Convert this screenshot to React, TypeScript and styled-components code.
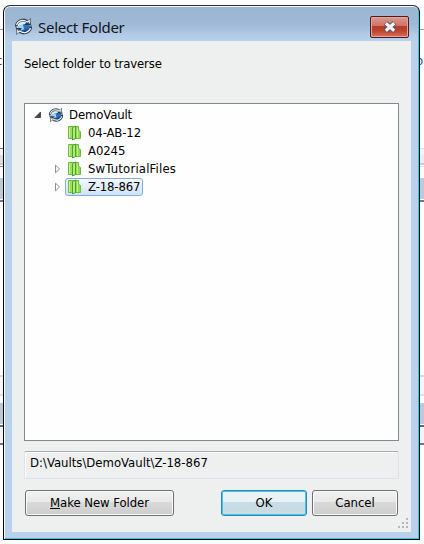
import React from "react";
import styled, { createGlobalStyle } from "styled-components";

const Global = createGlobalStyle`
  * { box-sizing: border-box; }
  body { margin: 0; background: #fefefe; overflow: hidden; }
`;

const Desktop = styled.div`
  display: grid;
  grid-template-columns: 3px 417px 4px;
  width: 424px;
  height: 544px;
  font: 13px/18px "DejaVu Sans Condensed", "DejaVu Sans", sans-serif;
  font-stretch: condensed;
  color: #000;
`;

const Backdrop = styled.div<{ $side: "left" | "right" }>`
  overflow: hidden;
  padding-top: 52px;
  color: #35506d;
  white-space: nowrap;
  text-indent: -4px;
  background: linear-gradient(
    #fefefe 29px, #999 29px 30px, #fefefe 30px 148px,
    ${(p) => (p.$side === "left" ? "#777" : "#ddd")} 148px 149px,
    #f4f4f4 149px 155px,
    ${(p) => (p.$side === "left" ? "#dedede" : "#eee")} 155px 163px,
    #ccc 163px 165px, #fefefe 165px 166px,
    ${(p) => (p.$side === "left" ? "#888" : "#ddd")} 166px 167px,
    #fafafa 167px 178px, #bdcbd8 178px 199px, #fff 199px 200px,
    #777 200px 202px, #fefefe 202px 375px, #d8dade 375px 377px,
    #f5f6f6 377px 394px, #dedfee 394px 396px, #fefefe 396px 403px,
    #bdcad6 403px 424px, #fff 424px 425px, #666 425px 427px,
    #f4f4f4 427px 443px, #777 443px 445px, #fefefe 445px
  );
`;

const Dialog = styled.section`
  margin-top: 5px;
  height: 535px;
  border: 1px solid #050509;
  border-top-color: #2d2c3b;
  border-radius: 7px 7px 0 0;
  background: #b9d1ea;
  box-shadow: inset 1px 1px 0 #f8fcff, inset -1px -1px 0 #20cae8;
  padding: 1px 8px 8px;
`;

const TitleBar = styled.header`
  display: flex;
  align-items: center;
  height: 34px;
  margin: 0 -7px;
  padding: 4px 9px 0 9px;
  border-radius: 5px 5px 0 0;
  background: linear-gradient(#9ab4d3, #a0b9d5 50%, #a9c1dc 68%, #b2c8e4 78%, #b9d1ea);
`;

const Title = styled.h1`
  flex: 1;
  margin: 0 0 0 5px;
  padding-top: 1px;
  font: 15px/22px "Noto Sans", sans-serif;
  letter-spacing: -0.28px;
  color: #10151c;
`;

const CloseButton = styled.button`
  display: grid;
  place-items: center;
  width: 39px;
  height: 22px;
  margin-top: 2px;
  padding: 0;
  border: 1px solid #4d1924;
  border-radius: 2px;
  background: linear-gradient(#db9a8e, #cf7164 45%, #b53c27 47%, #bd432f 70%, #d5705d);
  box-shadow: inset 0 0 0 1px #e6a59b;
`;

const Content = styled.main`
  display: flex;
  flex-direction: column;
  width: 399px;
  height: 491px;
  padding: 13px 12px 0;
  background: #eef0f0;
`;

const Prompt = styled.div`
  height: 49px;
  padding-top: 1px;
  letter-spacing: -0.16px;
`;

const Tree = styled.ul`
  height: 338px;
  margin: 0;
  padding: 2px 0 0 9px;
  list-style: none;
  border: 1px solid #828790;
  background: #fefefe;
`;

const TreeRow = styled.li<{ $level: number }>`
  display: flex;
  align-items: center;
  height: 18px;
  padding-left: ${(p) => p.$level * 19}px;
`;

const Expander = styled.span<{ $nested?: boolean }>`
  display: flex;
  width: 12px;
  padding-left: ${(p) => (p.$nested ? 1 : 0)}px;
`;

const Item = styled.span<{ $selected?: boolean; $spacing: number }>`
  display: flex;
  align-items: center;
  gap: 5px;
  height: 18px;
  padding: 0 2px 0 1px;
  letter-spacing: ${(p) => p.$spacing}px;
  border: 1px solid ${(p) => (p.$selected ? "#84acdd" : "transparent")};
  border-radius: 3px;
  background: ${(p) => (p.$selected ? "linear-gradient(#f3f8fd, #d0e2f7)" : "none")};
`;

const PathBox = styled.div`
  height: 28px;
  margin-top: 10px;
  padding: 2px 5px;
  border: 1px solid #dfe2eb;
  border-top-color: #a9abb2;
  border-radius: 2px;
  box-shadow: inset 1px 1px 0 #fff;
`;

const Actions = styled.footer`
  display: flex;
  gap: 5px;
  margin: 11px 1px 0 1px;
`;

const Button = styled.button<{ $width: number; $primary?: boolean }>`
  width: ${(p) => p.$width}px;
  height: 26px;
  padding: 0;
  font: inherit;
  letter-spacing: -0.05px;
  color: #000;
  border: 1px solid ${(p) => (p.$primary ? "#3a80ad" : "#707070")};
  border-radius: 3px;
  background: ${(p) =>
    p.$primary
      ? "linear-gradient(#eaf2f4 0 46%, #c8dde7 46%, #c9dbe0)"
      : "linear-gradient(#f1f1f1, #e9e9e9 46%, #dadada 46%, #cdcdcd)"};
  box-shadow: inset 0 0 0 1px ${(p) => (p.$primary ? "#35cdef" : "#fafafa")};
`;

const Spacer = styled.div`
  flex: 1;
`;

const GripRow = styled.div`
  display: flex;
  justify-content: flex-end;
  margin: 1px -10px 0 0;
`;

const VaultIcon = ({ size }: { size: number }) => (
  <svg width={size} height={size} viewBox="0 0 19 19">
    <circle cx="9.500" cy="9.500" r="7.500" fill="#dce8f2" stroke="#46586b" />
    <path d="M3.500 9.500 9 7.500l7 1v4l-5 3-7-2z" fill="#2b7fce" />
    <path d="m3.500 9.500 5.500-2 2 4.500-5 1.500z" fill="#a4d5f4" />
    <path d="m9 7.500 6.500.5-1.500 4-4 .500z" fill="#2674c9" />
    <path d="m7 14 8-3-1.500 3.500-4 2z" fill="#174c9a" />
    <path d="M1 9.500C1 5 5 1.500 10 2l4 1.500L16.500 1v7H10l2.500-2.500C9 3.500 4 5 3.500 9z" fill="#2b3847" />
    <path d="M18 9.500c0 5-4 8-9 7.500L5 15.500 2.500 18v-7H8l-2 2.500c4 2 9.500.5 9.500-4z" fill="#2b3847" />
    <path d="M2.500 8C4 3.500 9 2 13.500 5l1.800-1.500v3M16.500 11C15 15.500 10 17 5.500 14l-1.800 1.500v-3" stroke="#eef3f6" strokeWidth="1.200" fill="none" />
  </svg>
);

const FolderIcon = () => (
  <svg width="15" height="16" viewBox="0 0 15 16">
    <path d="M1.500 1.500h5v12h-5z" fill="#9be35c" stroke="#6fb944" />
    <path d="M2.500 2.500v10.500" stroke="#c9f596" />
    <path d="M7.500 1.500h4V5.500l2 1v7h-6z" fill="#8edb4e" stroke="#6fb944" />
    <path d="m5.500 2.500 3-1.500v12.500l-3 1.500z" fill="#b4ec78" stroke="#519f2c" />
    <path d="M10.500 2.500v10.500" stroke="#c1f08e" />
  </svg>
);

const OpenArrow = () => (
  <svg width="8" height="8" viewBox="0 0 8 8">
    <path d="M6.500 1v5.500H1z" fill="#454545" stroke="#252525" strokeWidth=".7" />
  </svg>
);

const ClosedArrow = () => (
  <svg width="8" height="10" viewBox="0 0 8 10">
    <path d="M1.500 1.200v7.600L5.500 5z" fill="#fff" stroke="#8f8f8f" />
  </svg>
);

const FolderLabel = styled.span`
  padding-left: 1px;
`;

const folders = [
  { name: "04-AB-12", spacing: -0.12 },
  { name: "A0245", spacing: -0.1 },
  { name: "SwTutorialFiles", spacing: 0.18, expandable: true },
  { name: "Z-18-867", spacing: -0.14, expandable: true, selected: true },
];

export default function App() {
  return (
    <>
      <Global />
      <Desktop>
        <Backdrop $side="left">c</Backdrop>
        <Dialog>
          <TitleBar>
            <VaultIcon size={19} />
            <Title>Select Folder</Title>
            <CloseButton aria-label="Close">
              <svg width="16" height="14" viewBox="0 0 16 14">
                <path d="m3.500 3 9 8m0-8-9 8" stroke="#4c5265" strokeWidth="5" />
                <path d="m3.800 3.300 8.400 7.400m0-7.400-8.400 7.400" stroke="#f3f3f3" strokeWidth="3.200" />
              </svg>
            </CloseButton>
          </TitleBar>
          <Content>
            <Prompt>Select folder to traverse</Prompt>
            <Tree>
              <TreeRow $level={0}>
                <Expander><OpenArrow /></Expander>
                <Item $spacing={-0.12}><VaultIcon size={16} />DemoVault</Item>
              </TreeRow>
              {folders.map((f) => (
                <TreeRow $level={1} key={f.name}>
                  <Expander $nested>{f.expandable && <ClosedArrow />}</Expander>
                  <Item $spacing={f.spacing} $selected={f.selected}>
                    <FolderIcon />
                    <FolderLabel>{f.name}</FolderLabel>
                  </Item>
                </TreeRow>
              ))}
            </Tree>
            <PathBox>D:\Vaults\DemoVault\Z-18-867</PathBox>
            <Actions>
              <Button $width={149}><u>M</u>ake New Folder</Button>
              <Spacer />
              <Button $width={86} $primary>OK</Button>
              <Button $width={86}>Cancel</Button>
            </Actions>
            <GripRow>
              <svg width="12" height="12" viewBox="0 0 12 12" fill="#b4b6b8">
                <path d="M9 1h2v2H9zM5 5h2v2H5zM9 5h2v2H9zM1 9h2v2H1zM5 9h2v2H5zM9 9h2v2H9z" />
              </svg>
            </GripRow>
          </Content>
        </Dialog>
        <Backdrop $side="right">o</Backdrop>
      </Desktop>
    </>
  );
}
